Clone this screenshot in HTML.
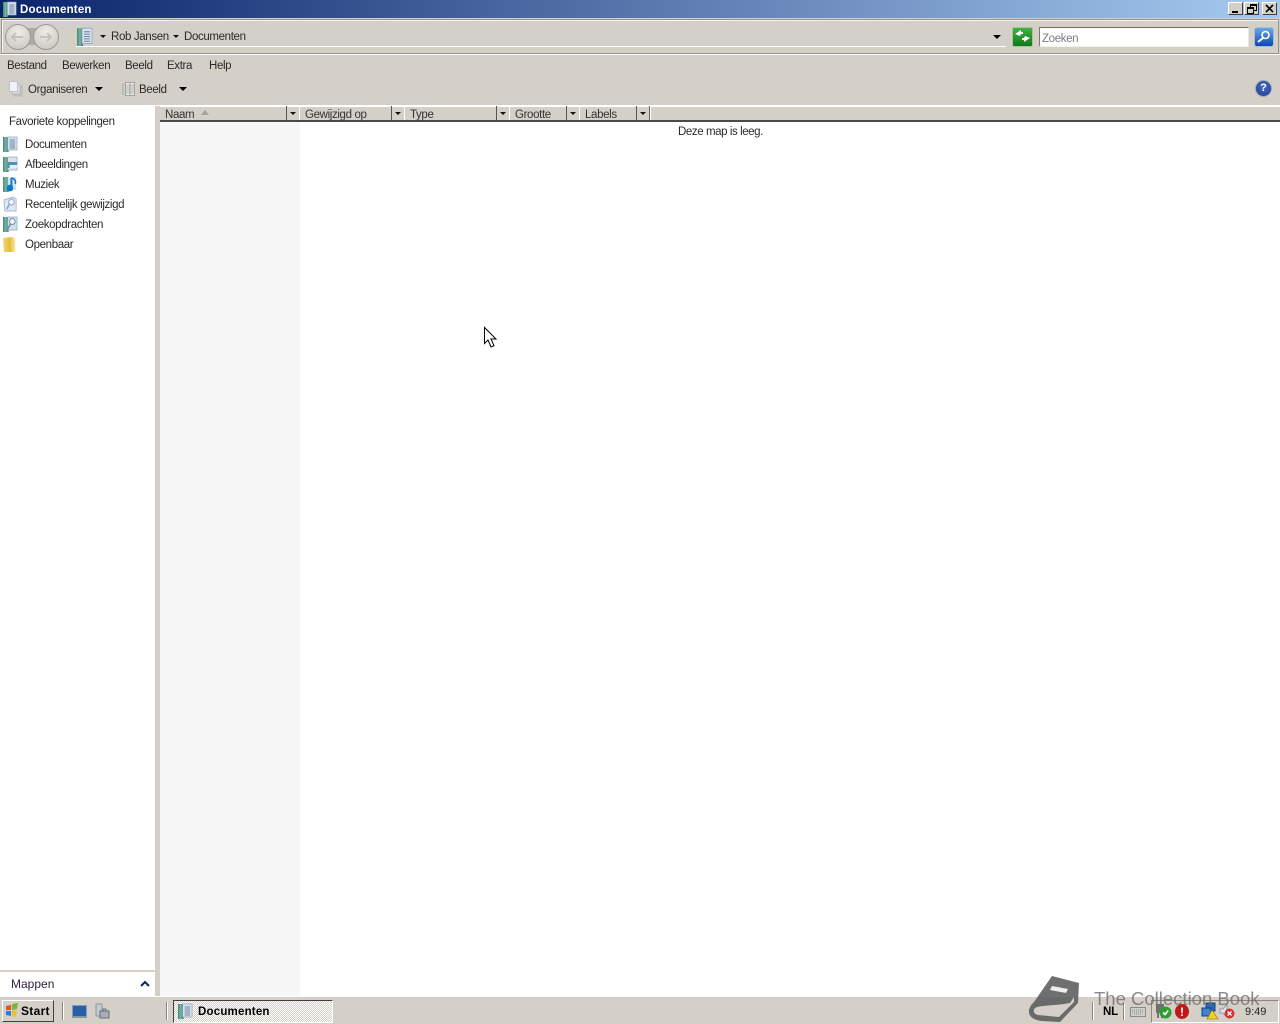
<!DOCTYPE html>
<html><head><meta charset="utf-8"><title>Documenten</title>
<style>
html,body{margin:0;padding:0;width:1280px;height:1024px;overflow:hidden;background:#d4d0c8}
body{position:relative;font-family:"Liberation Sans",sans-serif;font-size:11.5px;color:#2a2a2a}
.a{position:absolute}
.t{position:absolute;white-space:nowrap;line-height:14px;margin-top:1px;letter-spacing:-.36px}
.sep{position:absolute;top:106px;width:1px;height:14px;background:#555}
svg{position:absolute;overflow:visible}
.btn{position:absolute;top:2px;background:#d4d0c8;border:1px solid;border-color:#fff #404040 #404040 #fff;box-sizing:border-box;height:13px}
</style></head><body>
<svg width="0" height="0" style="position:absolute"><defs>
<linearGradient id="tl" x1="0" x2="1" y1="0" y2="0"><stop offset="0" stop-color="#3f8a78"/><stop offset=".5" stop-color="#78b8a0"/><stop offset="1" stop-color="#2f6f80"/></linearGradient>
<linearGradient id="gd" x1="0" x2="1" y1="0" y2="0"><stop offset="0" stop-color="#f0d878"/><stop offset=".5" stop-color="#e8bf3c"/><stop offset="1" stop-color="#f5e69a"/></linearGradient>
<symbol id="doc" viewBox="0 0 16 16" preserveAspectRatio="none"><rect x="0" y="1" width="6" height="15" fill="url(#tl)"/><rect x="5" y="1" width="10" height="13" fill="#d8e2ec" stroke="#8ba0b8" stroke-width=".7"/><path d="M7 4h6M7 6h6M7 8h6M7 10h6M7 12h6" stroke="#6b84a4" stroke-width=".9"/></symbol>
<symbol id="pic" viewBox="0 0 16 16" preserveAspectRatio="none"><rect x="0" y="1" width="6" height="15" fill="url(#tl)"/><rect x="5" y="1" width="10" height="13" fill="#d6e4ea" stroke="#8ba0b8" stroke-width=".7"/><rect x="5" y="6" width="10" height="6" fill="#4f90b4"/><rect x="7" y="9" width="8" height="3" fill="#e8f0f5"/></symbol>
<symbol id="mus" viewBox="0 0 16 16" preserveAspectRatio="none"><rect x="0" y="1" width="6" height="15" fill="url(#tl)"/><rect x="5" y="1" width="9" height="13" fill="#d6e4ea"/><path d="M9 2v10" stroke="#0b78c8" stroke-width="2"/><path d="M9 2c4 1 5 3 4 6" stroke="#0b78c8" stroke-width="1.6" fill="none"/><circle cx="7.5" cy="12" r="3.4" fill="#0b78c8"/></symbol>
<symbol id="rec" viewBox="0 0 16 16" preserveAspectRatio="none"><path d="M1 4l10-3 3 2v12H2z" fill="#dfe8f6" stroke="#a4b8d8"/><circle cx="9" cy="6" r="3" fill="#f0f5fb" stroke="#8ea3c8"/><path d="M7 8l-3 5" stroke="#8ea3c8" stroke-width="1.700"/></symbol>
<symbol id="zoe" viewBox="0 0 16 16" preserveAspectRatio="none"><rect x="0" y="1" width="6" height="15" fill="url(#tl)"/><rect x="5" y="1" width="10" height="13" fill="#cfe0e8" stroke="#8ba0b8" stroke-width=".7"/><circle cx="10" cy="5.500" r="3" fill="#eef5fa" stroke="#6f8cb0"/><path d="M8 8l-3 5" stroke="#6f8cb0" stroke-width="1.700"/></symbol>
<symbol id="pub" viewBox="0 0 16 16" preserveAspectRatio="none"><path d="M0 2l10-1 3 2v13H1z" fill="url(#gd)"/><path d="M7 2l1 14" stroke="#d9b040" stroke-width=".8"/></symbol>
</defs></svg>

<!-- title bar -->
<div class="a" style="left:0;top:0;width:1280px;height:18px;background:linear-gradient(90deg,#0a246a 0%,#a6caf0 100%)"></div>
<svg style="left:3px;top:1px" width="14" height="16"><use href="#doc" width="14" height="16"/></svg>
<div class="t" style="left:20px;top:2px;color:#fff;font-weight:bold;font-size:11.5px;letter-spacing:.2px">Documenten</div>
<div class="btn" style="left:1228px;width:15px"><div class="a" style="left:3px;top:8px;width:6px;height:2px;background:#000"></div></div>
<div class="btn" style="left:1244px;width:15px"><div class="a" style="left:5px;top:1px;width:5px;height:4px;border:1px solid #000;border-top-width:2px"></div><div class="a" style="left:2px;top:4px;width:5px;height:4px;background:#d4d0c8;border:1px solid #000;border-top-width:2px"></div></div>
<div class="btn" style="left:1262px;width:15px"><svg style="left:2px;top:1px" width="10" height="9"><path d="M1 1l7 7M8 1l-7 7" stroke="#000" stroke-width="1.6"/></svg></div>

<!-- nav row -->
<div class="a" style="left:1px;top:19px;width:1276px;height:33px;border:1px solid #96938c;box-shadow:inset 1px 1px 0 #f4f3f0"></div>
<div class="a" style="left:0;top:54px;width:1280px;height:1px;background:#fff"></div>
<div class="a" style="left:26px;top:28px;width:10px;height:17px;background:#aeaba4"></div>
<div class="a" style="left:5px;top:24px;width:24px;height:24px;border-radius:50%;border:1px solid #9b9992;background:radial-gradient(circle at 50% 30%,#efede9,#c6c3bc)"></div>
<div class="a" style="left:33px;top:24px;width:24px;height:24px;border-radius:50%;border:1px solid #9b9992;background:radial-gradient(circle at 50% 30%,#efede9,#c6c3bc)"></div>
<svg style="left:9px;top:30px" width="16" height="14"><path d="M14 7H3M7 3L3 7l4 4" stroke="#c2bfb8" stroke-width="1.800" fill="none"/></svg>
<svg style="left:38px;top:30px" width="16" height="14"><path d="M2 7h11M9 3l4 4-4 4" stroke="#c2bfb8" stroke-width="1.800" fill="none"/></svg>
<div class="a" style="left:76px;top:26px;width:930px;height:20px;border-bottom:1px solid #fff"></div>
<svg style="left:77px;top:27px" width="16" height="19"><use href="#doc" width="16" height="19"/></svg>
<svg style="left:100px;top:35px" width="7" height="5"><path d="M0 0h6L3 3z" fill="#111"/></svg>
<div class="t" style="left:111px;top:29px">Rob Jansen</div>
<svg style="left:173px;top:35px" width="7" height="5"><path d="M0 0h6L3 3z" fill="#111"/></svg>
<div class="t" style="left:184px;top:29px">Documenten</div>
<svg style="left:993px;top:35px" width="9" height="5"><path d="M0 0h8L4 4z" fill="#000"/></svg>
<div class="a" style="left:1012px;top:27px;width:19px;height:18px;background:linear-gradient(#42b042,#0f7a14);border:1px solid #a9c2a9;border-radius:2px"></div>
<svg style="left:1013px;top:29px" width="19" height="15"><path d="M8 1L2 5l5 2 1-2h2V3H8zM11 13l6-4-5-2-1 2H9v2h2z" fill="#fff"/></svg>
<div class="a" style="left:1039px;top:27px;width:208px;height:18px;background:#fff;border:1px solid;border-color:#6e6b65 #e8e6e1 #f2f1ee #7d7a74"></div>
<div class="t" style="left:1042px;top:31px;color:#7d7d7d">Zoeken</div>
<div class="a" style="left:1254px;top:27px;width:18px;height:18px;background:linear-gradient(#6aa7e8,#0c47b0);border:1px solid #a7bcd8;border-radius:3px"></div>
<svg style="left:1255px;top:29px" width="18" height="16"><circle cx="10.500" cy="6" r="3.500" fill="none" stroke="#fff" stroke-width="1.600"/><path d="M8 9l-5 4" stroke="#fff" stroke-width="2"/></svg>

<!-- menu -->
<div class="t" style="left:7px;top:58px">Bestand</div>
<div class="t" style="left:62px;top:58px">Bewerken</div>
<div class="t" style="left:125px;top:58px">Beeld</div>
<div class="t" style="left:167px;top:58px">Extra</div>
<div class="t" style="left:209px;top:58px">Help</div>

<!-- toolbar -->
<svg style="left:9px;top:81px" width="14" height="16"><rect x="5" y="5" width="8" height="10" fill="#c9c6be" stroke="#b0ada6" stroke-width=".6"/><rect x="3" y="3" width="8" height="10" fill="#d8dbe2" stroke="#a9a9ad" stroke-width=".6"/><rect x="0.500" y="0.500" width="8" height="10" fill="#f0f3f8" stroke="#a9aebd" stroke-width=".6"/></svg>
<div class="t" style="left:28px;top:82px">Organiseren</div>
<svg style="left:95px;top:87px" width="9" height="5"><path d="M0 0h8L4 4z" fill="#000"/></svg>
<svg style="left:122px;top:82px" width="14" height="15"><rect x="3.500" y=".5" width="9" height="13" fill="#f2f1ee" stroke="#888" stroke-width=".7"/><path d="M8 1v12M1 1v12M4 3h8M4 5h8M4 7h8M4 9h8M4 11h8" stroke="#999" stroke-width=".8"/></svg>
<div class="t" style="left:139px;top:82px">Beeld</div>
<svg style="left:179px;top:87px" width="9" height="5"><path d="M0 0h8L4 4z" fill="#000"/></svg>
<div class="a" style="left:1255px;top:80px;width:15px;height:15px;border-radius:50%;background:radial-gradient(circle at 50% 40%,#4a6cc0,#1d3a90);border:1px solid #a0a8c8"></div>
<div class="t" style="left:1255px;top:80px;width:17px;text-align:center;color:#fff;font-weight:bold;font-size:11px;letter-spacing:0">?</div>

<!-- body -->
<div class="a" style="left:0;top:105px;width:1280px;height:1px;background:#fff"></div>
<div class="a" style="left:0;top:106px;width:155px;height:864px;background:#fff"></div>
<div class="a" style="left:0;top:972px;width:155px;height:24px;background:#fff"></div>
<div class="a" style="left:160px;top:122px;width:1120px;height:874px;background:#fff"></div>
<div class="a" style="left:160px;top:122px;width:140px;height:874px;background:#f7f7f7"></div>
<div class="a" style="left:0;top:996px;width:1280px;height:1px;background:#fff"></div>

<div class="t" style="left:9px;top:114px">Favoriete koppelingen</div>
<svg style="left:3px;top:136px" width="15" height="16"><use href="#doc" width="15" height="16"/></svg>
<div class="t" style="left:25px;top:137px">Documenten</div>
<svg style="left:3px;top:156px" width="15" height="16"><use href="#pic" width="15" height="16"/></svg>
<div class="t" style="left:25px;top:157px">Afbeeldingen</div>
<svg style="left:3px;top:176px" width="15" height="16"><use href="#mus" width="15" height="16"/></svg>
<div class="t" style="left:25px;top:177px">Muziek</div>
<svg style="left:3px;top:196px" width="15" height="16"><use href="#rec" width="15" height="16"/></svg>
<div class="t" style="left:25px;top:197px">Recentelijk gewijzigd</div>
<svg style="left:3px;top:216px" width="15" height="16"><use href="#zoe" width="15" height="16"/></svg>
<div class="t" style="left:25px;top:217px">Zoekopdrachten</div>
<svg style="left:3px;top:236px" width="15" height="16"><use href="#pub" width="15" height="16"/></svg>
<div class="t" style="left:25px;top:237px">Openbaar</div>

<div class="t" style="left:11px;top:976px;color:#2f1f3f;font-size:12px;letter-spacing:0">Mappen</div>
<svg style="left:140px;top:980px" width="11" height="8"><path d="M1 6l4-4 4 4" stroke="#0a246a" stroke-width="2" fill="none"/></svg>

<!-- header -->
<div class="a" style="left:160px;top:120px;width:1120px;height:2px;background:#4a4a48"></div>
<div class="a" style="left:160px;top:106px;width:1120px;height:1px;background:#fff"></div>
<div class="t" style="left:165px;top:107px;color:#333">Naam</div>
<svg style="left:201px;top:110px" width="9" height="6"><path d="M0 5h8L4 0z" fill="#a5a29b"/></svg>
<div class="t" style="left:305px;top:107px;color:#333">Gewijzigd op</div>
<div class="t" style="left:410px;top:107px;color:#333">Type</div>
<div class="t" style="left:515px;top:107px;color:#333">Grootte</div>
<div class="t" style="left:585px;top:107px;color:#333">Labels</div>
<div class="sep" style="left:286px"></div><div class="sep" style="left:299px;background:#fff"></div>
<div class="sep" style="left:391px"></div><div class="sep" style="left:404px;background:#fff"></div>
<div class="sep" style="left:496px"></div><div class="sep" style="left:509px;background:#fff"></div>
<div class="sep" style="left:566px"></div><div class="sep" style="left:579px;background:#fff"></div>
<div class="sep" style="left:636px"></div><div class="sep" style="left:649px;background:#666"></div><div class="sep" style="left:650px;background:#fff"></div>
<svg style="left:290px;top:112px" width="7" height="4"><path d="M0 0h6L3 3z" fill="#111"/></svg>
<svg style="left:395px;top:112px" width="7" height="4"><path d="M0 0h6L3 3z" fill="#111"/></svg>
<svg style="left:500px;top:112px" width="7" height="4"><path d="M0 0h6L3 3z" fill="#111"/></svg>
<svg style="left:570px;top:112px" width="7" height="4"><path d="M0 0h6L3 3z" fill="#111"/></svg>
<svg style="left:640px;top:112px" width="7" height="4"><path d="M0 0h6L3 3z" fill="#111"/></svg>
<div class="t" style="left:678px;top:124px;font-size:11.5px;letter-spacing:-.42px">Deze map is leeg.</div>

<!-- cursor -->
<svg style="left:484px;top:327px" width="13" height="21"><path d="M.5.5v16l3.500-3.500 3 7 3-1.300-3-6.700h5z" fill="#fff" stroke="#000"/></svg>

<!-- taskbar -->
<div class="a" style="left:2px;top:1000px;width:50px;height:20px;background:#d4d0c8;border:1px solid;border-color:#fff #404040 #404040 #fff"></div>
<svg style="left:5px;top:1003px" width="15" height="15"><path d="M1 3l5-1v5H1z" fill="#d9562c"/><path d="M7 1l6-1-1 6-5 1z" fill="#7fb23a"/><path d="M1 8h5v5l-5-1z" fill="#2d7fd0"/><path d="M7 8l5-1-1 7-4-1z" fill="#f0c030"/></svg>
<div class="t" style="left:21px;top:1003px;color:#000;font-weight:bold;font-size:12px;letter-spacing:.3px">Start</div>
<div class="a" style="left:62px;top:1002px;width:1px;height:18px;background:#8a8780;border-right:1px solid #fff"></div>
<div class="a" style="left:72px;top:1005px;width:13px;height:10px;background:#2a5fa8;border:1px solid #7f9cc4;border-bottom:2px solid #8a93a4"></div>
<svg style="left:95px;top:1003px" width="15" height="16"><rect x="1" y="1" width="6" height="12" fill="#c4cad4" stroke="#8f96a0"/><rect x="5" y="8" width="9" height="7" fill="#a8aeb8" stroke="#666d78"/><path d="M8 8V6h3v2" stroke="#666d78" fill="none"/></svg>
<div class="a" style="left:166px;top:1002px;width:1px;height:18px;background:#8a8780;border-right:1px solid #fff"></div>
<div class="a" style="left:173px;top:1000px;width:158px;height:21px;border:1px solid;border-color:#404040 #fff #fff #404040;background-color:#e8e6e1;background-image:repeating-conic-gradient(#fff 0 25%,#d4d0c8 0 50%);background-size:2px 2px"></div>
<svg style="left:178px;top:1003px" width="15" height="16"><use href="#doc" width="15" height="16"/></svg>
<div class="t" style="left:198px;top:1004px;color:#000;font-weight:bold;font-size:11.5px;letter-spacing:.2px">Documenten</div>

<!-- tray -->
<div class="a" style="left:1092px;top:1002px;width:1px;height:18px;background:#8a8780;border-right:1px solid #fff"></div>
<div class="t" style="left:1103px;top:1004px;color:#000;font-weight:bold;font-size:11.5px;letter-spacing:-.2px">NL</div>
<div class="a" style="left:1123px;top:1002px;width:1px;height:18px;background:#8a8780;border-right:1px solid #fff"></div>
<svg style="left:1130px;top:1004px" width="16" height="14"><rect x=".5" y="3.500" width="15" height="9" fill="#cfcfcb" stroke="#8a8a86"/><path d="M2 6h12M2 8h12M4 10h8" stroke="#8a8a86" stroke-dasharray="1 1"/></svg>
<div class="a" style="left:1151px;top:1000px;width:126px;height:21px;border:1px solid;border-color:#8a8780 #fff #fff #8a8780"></div>
<svg style="left:1155px;top:1003px" width="18" height="16"><rect x="1" y="1" width="8" height="9" fill="#707070"/><path d="M3 10v5M7 10v5" stroke="#555" stroke-width="1.500"/><circle cx="10.500" cy="9.500" r="6" fill="#2e9e30"/><path d="M8 9.500l2 2 3.200-4" stroke="#fff" stroke-width="1.600" fill="none"/></svg>
<div class="a" style="left:1175px;top:1004px;width:14px;height:15px;border-radius:50%;background:#c01818"></div>
<div class="t" style="left:1176px;top:1004px;width:12px;text-align:center;color:#fff;font-weight:bold;font-size:12px;letter-spacing:0">!</div>
<svg style="left:1201px;top:1002px" width="18" height="18"><rect x="5" y="1" width="9" height="8" fill="#2a6ab8" stroke="#163f78"/><rect x="1" y="6" width="9" height="8" fill="#3f83d0" stroke="#163f78"/><path d="M11 8l6 9H6z" fill="#f4d020" stroke="#8a7000" stroke-width=".6"/></svg>
<svg style="left:1219px;top:1003px" width="18" height="16"><path d="M1 6h3l4-5v13l-4-4H1z" fill="#dfe4ea" stroke="#8e98a5"/><circle cx="10.500" cy="10.500" r="5" fill="#d83030"/><path d="M8.500 8.500l4 4M12.500 8.500l-4 4" stroke="#fff" stroke-width="1.300"/></svg>
<div class="t" style="left:1245px;top:1004px;color:#222;font-size:11px;letter-spacing:0">9:49</div>

<!-- watermark -->
<svg style="left:1028px;top:975px" width="54" height="49" opacity=".88"><path d="M24 1L51 8 50 28 32 47 14 46C6 45 0 42 1 35 2 31 4 29 6 27z" fill="#5c5c5c"/><path d="M7 33C12 30 26 31 42 28L46 22 46 27 31 42 10 40C5 39 5 35 7 33z" fill="#d4d0c8"/><path d="M24 11l16 3-2 4-16-3z" fill="#ececec"/></svg>
<div class="t" style="left:1094px;top:987px;color:#6e6e6e;opacity:.8;font-size:18.500px;line-height:22px;letter-spacing:0">The Collection Book</div>
</body></html>
